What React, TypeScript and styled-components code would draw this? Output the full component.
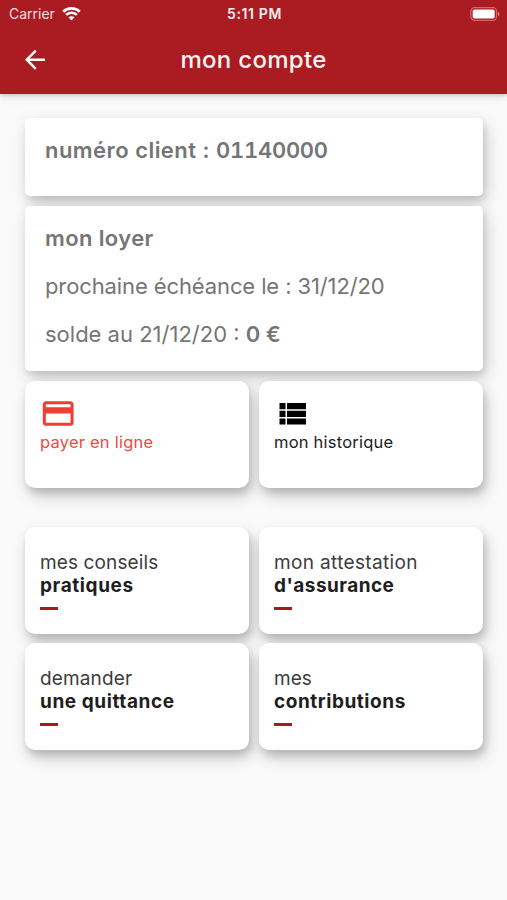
import React from "react";
import styled, { createGlobalStyle } from "styled-components";

const GlobalStyle = createGlobalStyle`
  * { box-sizing: border-box; }
  body {
    margin: 0;
    background: #fafafa;
    font-family: Inter, "Liberation Sans", sans-serif;
  }
`;

const Screen = styled.div`
  height: 900px;
  display: flex;
  flex-direction: column;
  background: #fafafa;
  overflow: hidden;
`;

const Header = styled.header`
  height: 94px;
  flex: none;
  background: #aa1c21;
  color: #fff;
  box-shadow: 0 1px 4px rgba(0, 0, 0, 0.22), 0 4px 10px rgba(0, 0, 0, 0.06);
`;

const StatusBar = styled.div`
  height: 27px;
  padding: 0 7px 0 9px;
  display: grid;
  grid-template-columns: 1fr auto 1fr;
  align-items: center;
  font-size: 14px;
  line-height: 27px;
`;

const Carrier = styled.div`
  display: flex;
  align-items: center;
  gap: 7px;
  color: #fbdfe0;
`;

const Clock = styled.div`
  font-weight: 600;
  letter-spacing: 0.6px;
  color: #fdeeee;
`;

const Battery = styled.svg`
  justify-self: end;
`;

const TitleBar = styled.div`
  height: 66px;
  padding: 0 22px;
  display: grid;
  grid-template-columns: 28px 1fr 28px;
  align-items: center;
`;

const Title = styled.h1`
  margin: 0;
  text-align: center;
  font-size: 24px;
  line-height: 30px;
  font-weight: 500;
  letter-spacing: 0.3px;
  color: #fff3f3;
`;

const Content = styled.main`
  padding: 24px 24px 0 25px;
  display: flex;
  flex-direction: column;
  gap: 10px;
`;

const Card = styled.section<{ $height: number }>`
  height: ${(p) => p.$height}px;
  padding: 18px 20px 0;
  border-radius: 5px;
  background: #fff;
  box-shadow: 2px 4px 6px rgba(0, 0, 0, 0.1), 3px 7px 18px rgba(0, 0, 0, 0.18);
  color: #757575;
  font-size: 22px;
  line-height: 28px;
`;

const Line = styled.p<{ $bold?: boolean; $spacing?: number }>`
  margin: 0 0 20px;
  font-weight: ${(p) => (p.$bold ? 600 : 400)};
  letter-spacing: ${(p) => p.$spacing ?? 0}px;
  white-space: nowrap;
`;

const ClientNumber = styled.span`
  font-variant-numeric: tabular-nums;
  letter-spacing: -0.25px;
`;

const Amount = styled.strong`
  font-weight: 600;
`;

const Tiles = styled.div<{ $offset?: number }>`
  display: grid;
  grid-template-columns: 1fr 1fr;
  grid-auto-rows: 107px;
  gap: 9.4px 10px;
  margin-top: ${(p) => p.$offset ?? 0}px;
`;

const Tile = styled.div<{ $top: number }>`
  padding: ${(p) => p.$top}px 15px 0;
  display: flex;
  flex-direction: column;
  align-items: flex-start;
  border-radius: 10px;
  background: #fff;
  box-shadow: 2px 5px 7px rgba(0, 0, 0, 0.12), 3px 8px 16px rgba(0, 0, 0, 0.2);
`;

const IconLabel = styled.span<{ $color: string }>`
  margin-top: -1px;
  font-size: 16.5px;
  line-height: 22px;
  letter-spacing: 0.22px;
  color: ${(p) => p.$color};
`;

const TileText = styled.span<{ $bold?: boolean; $spacing?: number }>`
  font-size: 19px;
  line-height: 23px;
  font-weight: ${(p) => (p.$bold ? 700 : 400)};
  letter-spacing: ${(p) => p.$spacing ?? 0}px;
  color: ${(p) => (p.$bold ? "#1e1e1e" : "#3c3c3c")};
  white-space: nowrap;
`;

const Dash = styled.span`
  width: 18px;
  height: 3px;
  margin-top: 10px;
  background: #a51a20;
`;

const links = [
  { top: "mes conseils", bottom: "pratiques", ts: 0.12, bs: 0.6 },
  { top: "mon attestation", bottom: "d'assurance", ts: 0.35, bs: 0.45 },
  { top: "demander", bottom: "une quittance", ts: 0.15, bs: 0.58 },
  { top: "mes", bottom: "contributions", ts: 0, bs: 0.55 },
];

function WifiIcon() {
  return (
    <svg width="19" height="14" viewBox="0 0 19 14" fill="none" stroke="#fff" strokeWidth="2.7">
      <path d="M1.2 4.7C5.8.3 13.2.3 17.8 4.7" />
      <path d="M4.1 7.9c3-2.9 7.8-2.9 10.8 0" />
      <path d="M6.5 10.3c1.6-1.5 4.4-1.5 6 0L9.5 13.6z" fill="#fff" stroke="none" />
    </svg>
  );
}

function BatteryIcon() {
  return (
    <Battery width="30" height="14" viewBox="0 0 30 14">
      <rect x="0.9" y="0.7" width="25.6" height="12.6" rx="3.6" fill="none" stroke="#d0686c" strokeWidth="1.2" />
      <rect x="2.7" y="2.5" width="22" height="9" rx="1.8" fill="#fff" />
      <path d="M27.8 4.6c2.2.8 2.2 4 0 4.8z" fill="#d77d80" />
    </Battery>
  );
}

function BackIcon() {
  return (
    <svg width="28" height="28" viewBox="0 0 28 28" fill="none" stroke="#fff" strokeWidth="2.4">
      <path d="M23 13.7H5.2M13.8 4.6 4.7 13.7l9.1 9.1" />
    </svg>
  );
}

function CardIcon() {
  return (
    <svg width="37" height="37" viewBox="0.2 0 24 24" fill="#ee3e36">
      <path d="M20 4H4c-1.11 0-1.99.89-1.99 2L2 18c0 1.11.89 2 2 2h16c1.11 0 2-.89 2-2V6c0-1.11-.89-2-2-2zm0 14H4v-6h16v6zm0-10H4V6h16v2z" />
    </svg>
  );
}

function ListIcon() {
  return (
    <svg width="37" height="37" viewBox="0 0 37 37" fill="#000">
      <path d="M5.5 8h6v6.3h-6zM13 8h19v6.3H13zM5.5 15.8h6v6.2h-6zM13 15.8h19V22H13zM5.5 23.5h6v6h-6zM13 23.5h19v6H13z" />
    </svg>
  );
}

export default function App() {
  return (
    <Screen>
      <GlobalStyle />
      <Header>
        <StatusBar>
          <Carrier>
            <span>Carrier</span>
            <WifiIcon />
          </Carrier>
          <Clock>5:11 PM</Clock>
          <BatteryIcon />
        </StatusBar>
        <TitleBar>
          <BackIcon />
          <Title>mon compte</Title>
        </TitleBar>
      </Header>
      <Content>
        <Card $height={78}>
          <Line $bold $spacing={0.46}>
            numéro client : <ClientNumber>01140000</ClientNumber>
          </Line>
        </Card>
        <Card $height={165}>
          <Line $bold $spacing={0.38}>mon loyer</Line>
          <Line $spacing={-0.11}>prochaine échéance le : 31/12/20</Line>
          <Line>
            solde au 21/12/20 : <Amount>0 €</Amount>
          </Line>
        </Card>
        <Tiles>
          <Tile $top={14}>
            <CardIcon />
            <IconLabel $color="#ec4a42">payer en ligne</IconLabel>
          </Tile>
          <Tile $top={14}>
            <ListIcon />
            <IconLabel $color="#222">mon historique</IconLabel>
          </Tile>
        </Tiles>
        <Tiles $offset={29}>
          {links.map((l) => (
            <Tile key={l.top} $top={24}>
              <TileText $spacing={l.ts}>{l.top}</TileText>
              <TileText $bold $spacing={l.bs}>{l.bottom}</TileText>
              <Dash />
            </Tile>
          ))}
        </Tiles>
      </Content>
    </Screen>
  );
}
